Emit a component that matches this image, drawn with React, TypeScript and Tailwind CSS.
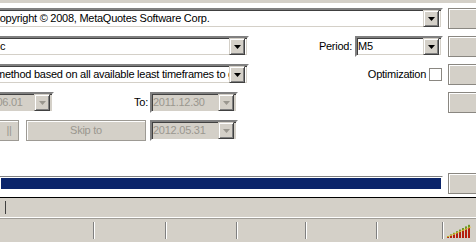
import React from 'react';

function Arrow({ disabled }: { disabled?: boolean }) {
  return (
    <div className="w-[16px] h-[17px] shrink-0 bg-[#d4d0c8] border border-t-[#d4d0c8] border-l-[#d4d0c8] border-b-[#404040] border-r-[#404040] shadow-[inset_1px_1px_0_#ffffff,inset_-1px_-1px_0_#808080] flex items-center justify-center">
      <svg width="7" height="4" viewBox="0 0 7 4">
        <path d="M0 0h7L3.5 4z" fill={disabled ? '#9a978f' : '#000000'} />
      </svg>
    </div>
  );
}

function Combo({
  text,
  className,
  textClass,
  disabled,
}: {
  text: string;
  className: string;
  textClass?: string;
  disabled?: boolean;
}) {
  return (
    <div
      className={`h-[21px] flex items-center border-2 border-t-[#808080] border-l-[#808080] border-b-white border-r-white shadow-[inset_1px_1px_0_#404040,inset_-1px_-1px_0_#d4d0c8] pr-[2px] ${
        disabled ? 'bg-[#d4d0c8] text-[#9a978f]' : 'bg-white text-black'
      } ${className}`}
    >
      <div className={`flex-1 overflow-hidden whitespace-nowrap leading-[17px] ${textClass ?? ''}`}>{text}</div>
      <Arrow disabled={disabled} />
    </div>
  );
}

function SideButton() {
  return <div className="w-[40px] h-[21px] shrink-0 bg-[#d4d0c8] border border-[#8a8781] shadow-[inset_1px_1px_0_#ffffff]" />;
}

function GrayButton({ label, className }: { label: string; className: string }) {
  return (
    <div
      className={`h-[21px] flex items-center justify-center bg-[#d4d0c8] text-[#9a978f] border border-[#9d9a94] shadow-[inset_1px_1px_0_#ffffff] ${className}`}
    >
      {label}
    </div>
  );
}

function SignalIcon() {
  const bars = [0, 1, 2, 3, 4, 5, 6, 7];
  return (
    <svg width="24" height="14" viewBox="0 0 24 14">
      {bars.map((i) => {
        const x = i * 3;
        const top = 12 - i * 1.6;
        const split = 13 - i * 1.3;
        return (
          <g key={i}>
            <rect x={x} y={top} width="2" height={Math.max(split - top, 0)} fill="#6f9a1e" />
            <rect x={x} y={split} width="2" height={14 - split} fill="#b4200e" />
          </g>
        );
      })}
      <path d="M0 13L24 3" stroke="#e8c23a" strokeWidth="0.8" />
    </svg>
  );
}

export default function App() {
  const sections = [95, 72, 71, 69, 71, 66];
  return (
    <div className="w-[476px] h-[250px] overflow-hidden bg-white text-[11px] tracking-[-0.25px] text-black font-['Liberation_Sans',sans-serif]">
      <div className="h-[3px] bg-[#d4d0c8]" />

      <div className="flex flex-col gap-[7px] pt-[5px]">
        <div className="flex gap-[5px]">
          <div className="w-[443px] shrink-0 flex">
            <Combo text="Copyright © 2008, MetaQuotes Software Corp." className="w-[454px] ml-[-11px] shrink-0" textClass="pl-[1px]" />
          </div>
          <SideButton />
        </div>

        <div className="flex gap-[5px]">
          <div className="w-[443px] shrink-0 flex items-center">
            <Combo text="c" className="w-[250px] ml-[-1px] shrink-0 border-l-0" textClass="pl-[1px]" />
            <div className="flex-1 text-right pr-[3px]">Period:</div>
            <Combo text="M5" className="w-[88px] shrink-0" textClass="pl-[1px]" />
          </div>
          <SideButton />
        </div>

        <div className="flex gap-[5px]">
          <div className="w-[443px] shrink-0 flex items-center">
            <Combo
              text="method based on all available least timeframes to generate each tick"
              className="w-[250px] ml-[-1px] shrink-0 border-l-0"
              textClass="ml-[-3px]"
            />
            <div className="flex-1 text-right pr-[3px]">Optimization</div>
            <div className="w-[13px] h-[13px] shrink-0 mr-[1px] bg-white border border-[#8a8781]" />
          </div>
          <SideButton />
        </div>

        <div className="flex gap-[5px]">
          <div className="w-[443px] shrink-0 flex items-center">
            <Combo text="2011.06.01" className="w-[86px] ml-[-32px] shrink-0" textClass="pl-[1px]" disabled />
            <div className="w-[96px] text-right pr-[2px] text-black">To:</div>
            <Combo text="2011.12.30" className="w-[88px] shrink-0" textClass="pl-[1px]" disabled />
          </div>
          <SideButton />
        </div>

        <div className="flex gap-[5px]">
          <div className="w-[443px] shrink-0 flex items-center">
            <GrayButton label="||" className="w-[30px] ml-[-11px] shrink-0 pl-[10px]" />
            <GrayButton label="Skip to" className="w-[120px] ml-[7px] shrink-0" />
            <div className="w-[4px] shrink-0" />
            <Combo text="2012.05.31" className="w-[88px] shrink-0" textClass="pl-[1px]" disabled />
          </div>
        </div>
      </div>

      <div className="flex gap-[5px] mt-[32px] items-center">
        <div className="w-[443px] shrink-0 h-[15px] border border-t-[#808080] border-l-0 border-b-white border-r-white p-[1px] bg-white">
          <div className="h-full bg-[#0a246a]" />
        </div>
        <SideButton />
      </div>

      <div className="mt-[3px] h-[20px] border-t border-black bg-[#d4d0c8] flex items-center pl-[5px]">
        <div className="w-[1px] h-[13px] bg-[#404040]" />
      </div>
      <div className="h-[1px] bg-white" />
      <div className="h-[1px] bg-[#a09d97]" />
      <div className="h-[23px] bg-[#d4d0c8] flex items-stretch">
        {sections.map((w, i) => (
          <div key={i} style={{ width: w }} className="shrink-0 flex justify-end py-[3px]">
            <div className="w-[1px] bg-[#808080]" />
            <div className="w-[1px] bg-white" />
          </div>
        ))}
        <div className="flex-1 flex items-center pl-[3px]">
          <SignalIcon />
        </div>
      </div>
    </div>
  );
}
